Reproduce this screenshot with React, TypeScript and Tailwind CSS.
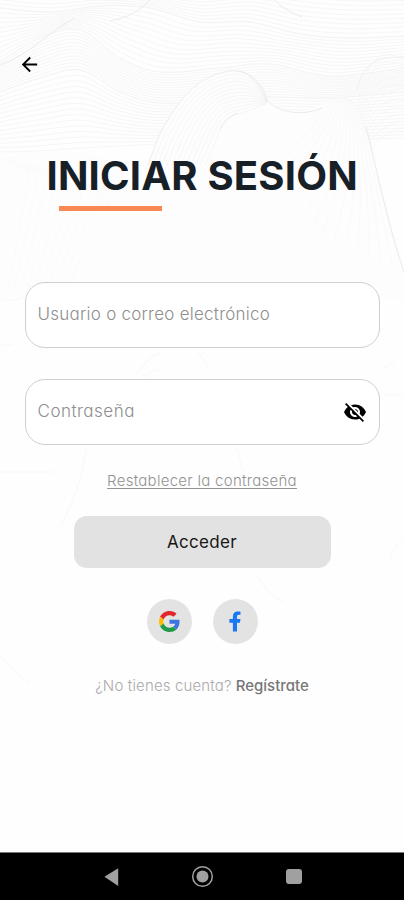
import React from "react";
import { MdArrowBack, MdVisibilityOff } from "react-icons/md";

type Point = [number, number];

const smooth = (pts: Point[]) => {
  let d = `M${pts[0][0]} ${pts[0][1]}`;
  for (let i = 0; i < pts.length - 1; i++) {
    const p0 = pts[Math.max(0, i - 1)];
    const p1 = pts[i];
    const p2 = pts[i + 1];
    const p3 = pts[Math.min(pts.length - 1, i + 2)];
    const n = [
      p1[0] + (p2[0] - p0[0]) / 6,
      p1[1] + (p2[1] - p0[1]) / 6,
      p2[0] - (p3[0] - p1[0]) / 6,
      p2[1] - (p3[1] - p1[1]) / 6,
      p2[0],
      p2[1],
    ].map((v) => v.toFixed(1));
    d += `C${n.join(" ")}`;
  }
  return d;
};

// Intermediate curves between two curves with the same number of points.
const between = (a: Point[], b: Point[], count: number) =>
  Array.from({ length: count + 1 }, (_, i) => {
    const t = i / count;
    return smooth(a.map((p, k): Point => [p[0] + (b[k][0] - p[0]) * t, p[1] + (b[k][1] - p[1]) * t]));
  });

const sky: Point[][] = [
  [[0, -30], [50, -25], [100, -20], [150, -12], [200, -8], [250, -14], [300, -8], [350, -4], [404, -4]],
  [[0, 8], [50, 12], [100, 6], [150, 8], [200, 22], [250, 22], [300, 34], [350, 38], [404, 36]],
  [[0, 62], [40, 38], [80, 30], [120, 58], [160, 72], [220, 68], [270, 64], [330, 76], [404, 68]],
  [[0, 92], [40, 78], [80, 70], [120, 92], [160, 103], [220, 99], [270, 97], [330, 98], [404, 92]],
  [[0, 152], [40, 151], [80, 148], [120, 146], [160, 144], [220, 142], [270, 140], [330, 140], [404, 138]],
];

const centreHill: Point[] = [[148, 165], [162, 130], [185, 96], [210, 77], [238, 71], [256, 82], [267, 101]];
const centreHillInner: Point[] = [[205, 165], [214, 145], [221, 128], [230, 117], [242, 113], [256, 108], [267, 103]];
const rightHillLeft: Point[] = [[230, 190], [262, 165], [290, 140], [312, 118], [326, 102], [334, 98], [342, 97]];
const rightHill: Point[] = [[404, 272], [395, 240], [386, 208], [375, 165], [366, 130], [356, 105], [342, 97]];
const farRight: Point[] = [[357, 106], [366, 74], [379, 57], [392, 55], [404, 58]];
const farRightLow: Point[] = [[370, 150], [378, 140], [388, 134], [396, 130], [404, 128]];
const leftFan: Point[] = [[0, 158], [14, 165], [28, 172], [22, 215], [8, 290]];
const midFan: Point[] = [[62, 170], [95, 190], [108, 205], [90, 235], [64, 300]];

function Contours() {
  return (
    <svg className="absolute inset-0 h-full w-full" viewBox="0 0 404 852" fill="none" stroke="#f2f2f2" aria-hidden="true">
      <g strokeWidth="0.7">
        {sky.slice(1).flatMap((row, i) =>
          between(sky[i], row, [9, 11, 12, 14][i]).map((d, k) => <path key={`${i}-${k}`} d={d} />),
        )}
      </g>
      <path d="M0 65C30 55 50 30 75 18M110 21C128 18 140 10 150 0M275 0C281 8 289 11 302 17" stroke="#ececec" />
      <path d="M148 165C162 128 185 70 238 71C255 74 266 90 267 101C290 117 310 112 326 102C345 90 360 108 366 130L404 272V300H0V158L60 150Z" fill="#fdfdfd" stroke="none" />
      <g strokeWidth="0.6">
        {between(centreHill, centreHillInner, 12).map((d, k) => <path key={k} d={d} />)}
        {between(rightHillLeft, rightHill, 15).map((d, k) => <path key={k} d={d} stroke="#f7f7f7" />)}
        {between(farRight, farRightLow, 10).map((d, k) => <path key={k} d={d} stroke="#f4f4f4" />)}
        {between(leftFan, midFan, 9).map((d, k) => <path key={k} d={d} stroke="#f9f9f9" />)}
      </g>
      <g stroke="#e9e9e9" strokeWidth="0.9">
        <path d={smooth(centreHill)} stroke="#ededed" />
        <path d="M238 71C255 74 266 90 267 101C280 112 300 117 322 108M220 129Q226 117 238 113M366 127C375 160 386 220 404 272" />
        <path d="M357 90C362 66 376 54 404 58" stroke="#eeeeee" />
      </g>
      <g stroke="#f8f8f8" strokeWidth="1">
        <path d="M136 374C148 361 151 354 162 353M198 352Q205 360 209 371M145 378Q152 369 160 370" />
        <path d="M87 448C81 475 79 490 61 525M237 448C242 463 240 474 250 482M0 472H55M384 395H404" />
        <path d="M404 538Q393 548 390 558M257 576Q268 595 283 602M0 655Q18 675 29 683" />
        <path d="M0 298Q13 305 25 294M0 345H13M383 368L396 362" />
      </g>
    </svg>
  );
}

function GoogleLogo() {
  return (
    <svg className="size-[21px]" viewBox="0 0 48 48">
      <path fill="#e3262b" d="M24 9.5c3.54 0 6.71 1.22 9.21 3.6l6.85-6.85C35.9 2.38 30.47 0 24 0 14.62 0 6.51 5.38 2.56 13.22l7.98 6.19C12.43 13.72 17.74 9.5 24 9.5z" />
      <path fill="#3c74e0" d="M46.98 24.55c0-1.57-.15-3.09-.38-4.55H24v9.02h12.94c-.58 2.96-2.26 5.48-4.78 7.18l7.73 6c4.51-4.18 7.09-10.36 7.09-17.65z" />
      <path fill="#fbbc05" d="M10.53 28.59c-.48-1.45-.76-2.99-.76-4.59s.27-3.14.76-4.59l-7.98-6.19C.92 16.46 0 20.12 0 24c0 3.88.92 7.54 2.56 10.78l7.97-6.19z" />
      <path fill="#219b49" d="M24 48c6.48 0 11.93-2.13 15.89-5.81l-7.73-6c-2.15 1.45-4.92 2.3-8.16 2.3-6.26 0-11.57-4.22-13.47-9.91l-7.98 6.19C6.51 42.62 14.62 48 24 48z" />
    </svg>
  );
}

export default function App() {
  return (
    <div className="flex h-[900px] w-[404px] flex-col overflow-hidden bg-[#fefefe] font-[Inter,'Open_Sans',sans-serif] [font-feature-settings:'cv11']">
      <main className="relative flex-1">
        <Contours />
        <div className="relative flex flex-col items-center">
          <header className="flex h-[146px] w-full items-start pt-[53px] pl-[18px]">
            <button aria-label="Volver">
              <MdArrowBack className="size-[23px] text-black" />
            </button>
          </header>

          <div className="w-[311px]">
            <h1 className="h-[60px] text-[40px] leading-[60px] font-bold tracking-[0.2px] whitespace-nowrap text-[#172027]">INICIAR SESIÓN</h1>
            <div className="ml-[12px] h-[5px] w-[103px] bg-[#f98855]" />
          </div>

          <form className="mt-[71px] flex w-[355px] flex-col gap-[31px]">
            <label className="flex h-[66px] items-center rounded-[20px] border border-[#cfcfcf] bg-white px-[12px]">
              <span className="text-[17px] font-light tracking-[0.25px] whitespace-nowrap text-[#8e8e8e]">Usuario o correo electrónico</span>
            </label>
            <label className="flex h-[66px] items-center justify-between rounded-[20px] border border-[#cfcfcf] bg-white px-[12px]">
              <span className="text-[17px] font-light tracking-[0.5px] text-[#8e8e8e]">Contraseña</span>
              <MdVisibilityOff className="size-6 text-black" />
            </label>
          </form>

          <a className="mt-[25px] h-[22px] text-[15px] leading-[22px] font-light tracking-[0.28px] whitespace-nowrap text-[#929292] underline decoration-1 underline-offset-2">Restablecer la contraseña</a>

          <button className="mt-[24px] flex h-[52px] w-[257px] items-center justify-center rounded-[13px] bg-[#e2e2e2] pt-[2px] text-[17px] tracking-[0.3px] text-[#161616]">
            <span>Acceder</span>
          </button>

          <div className="mt-[31px] flex gap-[21px]">
            <button aria-label="Google" className="flex size-[45px] items-center justify-center rounded-full bg-[#e3e3e3]">
              <GoogleLogo />
            </button>
            <button aria-label="Facebook" className="flex size-[45px] items-center justify-center rounded-full bg-[#e3e3e3]">
              <svg className="h-[21px] w-[12px]" viewBox="0 0 12 21" fill="#1877f2">
                <path d="M3.9 20.6V11.8H.4V8h3.5V5.4C3.9 2.1 5.8.5 8.7.5c1.4 0 2.8.2 2.8.2v3.1H9.9c-1.5 0-1.9.9-1.9 1.9V8h3.5l-.6 3.8H8v8.8Z" />
              </svg>
            </button>
          </div>

          <p className="mt-[31px] flex gap-[4px] text-[15px] leading-[22px] whitespace-nowrap">
            <span className="font-light tracking-[0.15px] text-[#aaaaaa]">¿No tienes cuenta?</span>
            <span className="font-medium text-[#777777]">Regístrate</span>
          </p>
        </div>
      </main>

      <nav className="flex h-[48px] items-center border-t border-[#777777] bg-black pl-[103px]">
        <svg className="h-[20px] w-[16px]" viewBox="0 0 16 20" fill="#a0a0a0"><path d="M1.4 9.7 15.2 1.2V19Z" /></svg>
        <svg className="ml-[72px] size-[23px]" viewBox="0 0 23 23" fill="#a0a0a0">
          <circle cx="11.5" cy="11.5" r="9.8" fill="none" stroke="#a0a0a0" strokeWidth="1.5" />
          <circle cx="11.5" cy="11.5" r="6" />
        </svg>
        <div className="ml-[72px] size-[15.5px] rounded-[3px] bg-[#a0a0a0]" />
      </nav>
    </div>
  );
}
